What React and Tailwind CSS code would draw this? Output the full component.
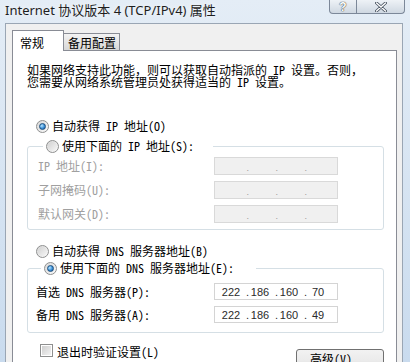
import { Fragment } from 'react';

function Radio({ checked }) {
    return (
        <span className="flex h-[13px] w-[13px] shrink-0 items-center justify-center rounded-full border border-[#8e8f8f] bg-linear-to-br from-[#d8d8d8] to-[#fbfbfb]">
            {checked ? (
                <span className="h-[7px] w-[7px] rounded-full border border-[#1c4f7e] bg-[radial-gradient(circle_at_35%_35%,#b8e6ff,#3a8fd8_55%,#17518c)]" />
            ) : (
                <span className="h-[9px] w-[9px] rounded-full bg-linear-to-br from-[#d2d2d2] to-[#f6f6f6]" />
            )}
        </span>
    );
}

function RadioRow({ checked, label, className = '' }) {
    return (
        <div className={`flex h-[16px] items-center gap-[3px] ${className}`}>
            <Radio checked={checked} />
            <span className="whitespace-pre leading-[16px]">{label}</span>
        </div>
    );
}

function IpField({ values, disabled, height }) {
    return (
        <div className={`flex w-[124px] items-center border pl-[5px] font-['Liberation_Sans',sans-serif] text-[11px] ${height} ${disabled ? 'border-[#d9d9d9] bg-[#f0f0f0] text-[#9a9a9a]' : 'border-[#d4d4d4] bg-white text-[#2a2a2a]'}`}>
            {values.map((v, i) => (
                <Fragment key={i}>
                    <span className="w-[22px] text-center leading-[14px]">{v}</span>
                    {i < 3 && <span className={`w-[7px] text-right leading-[14px] ${disabled ? 'text-[9px] pt-[4px]' : ''}`}>.</span>}
                </Fragment>
            ))}
        </div>
    );
}

export default function App() {
    const empty = ['', '', '', ''];

    return (
        <div className="h-[362px] w-[410px] overflow-hidden bg-linear-to-b from-[#e4edf6] to-[#c9dbee] pl-[5px] pr-[7px] font-['Noto_Sans_Mono_CJK_SC','Noto_Sans_CJK_SC',sans-serif] text-[12px] text-black">
            {/* Title bar */}
            <div className="flex h-[23px] items-start justify-between">
                <span className="pt-[1px] font-['Noto_Sans','Noto_Sans_CJK_SC',sans-serif] text-[13px] leading-[18px] text-[#1e1e1e] [text-shadow:0_0_6px_#ffffff]">
                    Internet 协议版本 4 (TCP/IPv4) 属性
                </span>
                <div className="-mr-[2px] flex h-[14px] overflow-hidden rounded-b-[4px] border border-t-0 border-[#7c8899] bg-linear-to-b from-[#eef2f6] to-[#cfd8e2]">
                    <div className="flex w-[27px] items-center justify-center border-r border-[#7c8899] font-['Liberation_Sans',sans-serif] text-[12px] font-bold leading-none text-white [text-shadow:0_0_1px_#333,0_0_1px_#333]">?</div>
                    <div className="flex w-[47px] items-center justify-center">
                        <svg width="12" height="10" viewBox="0 0 12 10">
                            <path d="M1.5 1 L10.5 9 M10.5 1 L1.5 9" stroke="#4a5563" strokeWidth="3" strokeLinecap="round" />
                            <path d="M1.5 1 L10.5 9 M10.5 1 L1.5 9" stroke="#ffffff" strokeWidth="1.4" strokeLinecap="round" />
                        </svg>
                    </div>
                </div>
            </div>

            {/* Client area */}
            <div className="h-[339px] border border-b-0 border-[#9aa6b4] bg-[#f0f0f0] pl-[6px] pr-[5px] pt-[6px]">
                {/* Tabs */}
                <div className="flex h-[20px] items-end">
                    <div className="relative z-10 -mb-px h-[21px] w-[52px] border border-b-0 border-[#898c95] bg-white pl-[7px] pt-[4px] leading-[16px]">常规</div>
                    <div className="-ml-px h-[17px] w-[57px] border border-b-0 border-[#898c95] bg-linear-to-b from-[#f3f3f3] to-[#d7d7d7] pl-[4px] pt-[1px] leading-[16px]">备用配置</div>
                </div>

                {/* Panel */}
                <div className="h-[320px] border border-[#898c95] bg-white pl-[14px] pr-[12px] pt-[13px]">
                    <p className="leading-[12px]">
                        如果网络支持此功能，则可以获取自动指派的 IP 设置。否则，
                        <br />
                        您需要从网络系统管理员处获得适当的 IP 设置。
                    </p>

                    <RadioRow checked label="自动获得 IP 地址(O)" className="mt-[30px] pl-[9px]" />

                    <fieldset className="mt-[4px] rounded-[3px] border border-[#d5dfe5] pb-[6px] pl-[10px] pt-[3px]">
                        <legend className="ml-[5px] w-[170px] pl-[3px]">
                            <RadioRow label="使用下面的 IP 地址(S):" />
                        </legend>
                        <div className="flex flex-col gap-[6px] text-[#a0a0a0]">
                            {['IP 地址(I):', '子网掩码(U):', '默认网关(D):'].map((l) => (
                                <div key={l} className="flex h-[18px] items-center">
                                    <span className="w-[176px] whitespace-pre">{l}</span>
                                    <IpField values={empty} disabled height="h-[18px]" />
                                </div>
                            ))}
                        </div>
                    </fieldset>

                    <RadioRow label="自动获得 DNS 服务器地址(B)" className="mt-[13px] pl-[9px]" />

                    <fieldset className="mt-[1px] rounded-[3px] border border-[#d5dfe5] pb-[9px] pl-[8px] pt-[7px]">
                        <legend className="ml-[5px] w-[215px] pl-[3px]">
                            <RadioRow checked label="使用下面的 DNS 服务器地址(E):" />
                        </legend>
                        <div className="flex flex-col gap-[6px]">
                            <div className="flex h-[17px] items-center">
                                <span className="w-[178px] whitespace-pre">首选 DNS 服务器(P):</span>
                                <IpField values={['222', '186', '160', '70']} height="h-[17px]" />
                            </div>
                            <div className="flex h-[17px] items-center">
                                <span className="w-[178px] whitespace-pre">备用 DNS 服务器(A):</span>
                                <IpField values={['222', '186', '160', '49']} height="h-[17px]" />
                            </div>
                        </div>
                    </fieldset>

                    <div className="mt-[9px] flex items-start justify-between pl-[13px]">
                        <div className="flex h-[17px] items-center gap-[4px]">
                            <span className="flex h-[13px] w-[13px] items-center justify-center border border-[#8e8f8f] bg-white">
                                <span className="h-[9px] w-[9px] bg-linear-to-br from-[#cfcfcf] to-[#f3f3f3]" />
                            </span>
                            <span className="pt-[2px] leading-[16px]">退出时验证设置(L)</span>
                        </div>
                        <button className="mt-[7px] flex h-[23px] w-[88px] items-start justify-center rounded-[3px] border border-[#707070] bg-linear-to-b from-[#f2f2f2] via-[#ebebeb] to-[#d6d6d6] pt-[1px] leading-[16px] text-black">
                            高级(V)...
                        </button>
                    </div>
                </div>
            </div>
        </div>
    );
}
